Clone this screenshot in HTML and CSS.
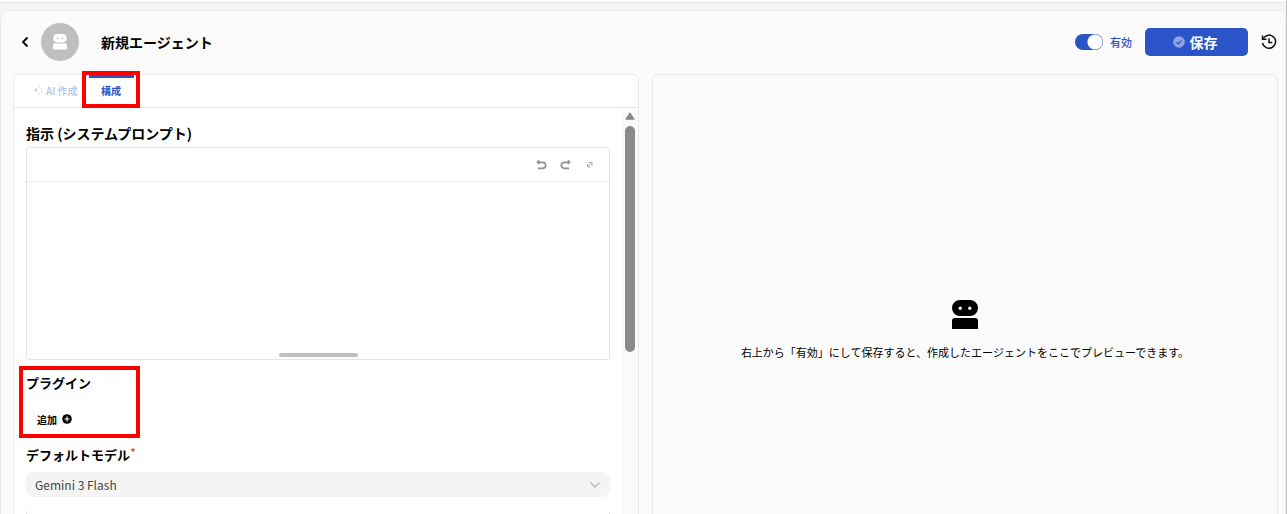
FILE: index.html
```html
<!DOCTYPE html>
<html lang="ja">
<head>
<meta charset="utf-8">
<title>新規エージェント</title>
<link rel="stylesheet" href="styles.css">
</head>
<body>
<svg class="defs" aria-hidden="true">
  <symbol id="robot" viewBox="0 0 26 30">
    <path fill="currentColor" fill-rule="evenodd" d="M8 0h10a8 8 0 0 1 0 16H8A8 8 0 0 1 8 0zM8.200 6.600a1.700 1.700 0 1 0 0 3.400a1.700 1.700 0 0 0 0-3.400zM17.800 6.600a1.700 1.700 0 1 0 0 3.400a1.700 1.700 0 0 0 0-3.400z"/>
    <path fill="currentColor" d="M3 18h20a3 3 0 0 1 3 3v8H0v-8a3 3 0 0 1 3-3z"/>
  </symbol>
</svg>
<div class="app">
  <header class="header">
    <button class="back" aria-label="戻る"><svg width="8" height="12" viewBox="0 0 8 12"><path d="M6.500 1.500L2 6l4.500 4.500" fill="none" stroke="#000" stroke-width="1.800"/></svg></button>
    <span class="avatar"><svg width="14" height="16"><use href="#robot"/></svg></span>
    <h1 class="title">新規エージェント</h1>
    <label class="enable"><input class="switch" type="checkbox" checked>有効</label>
    <button class="save"><svg width="12" height="12" viewBox="0 0 12 12"><circle cx="6" cy="6" r="5.800" fill="#8ea4e2"/><path d="M3.500 6.200l1.800 1.700 3.200-3.500" fill="none" stroke="#2b54c8" stroke-width="1.300"/></svg>保存</button>
    <button class="history" aria-label="履歴"><svg width="16" height="16" viewBox="0 0 16 16" fill="none" stroke="#111" stroke-width="1.500"><path d="M2.200 4.500A6.600 6.600 0 1 1 1.500 9"/><path d="M1.500 1.500v3.800h4"/><path d="M8 4.200v4.300h3.300"/></svg></button>
  </header>
  <main class="columns">
    <section class="panel editor">
      <nav class="tabs">
        <button class="tab" disabled><svg width="10" height="10" viewBox="0 0 10 10" fill="#c3cdef"><path d="M3 2.500l.8 1.700 1.700.8-1.700.8L3 7.500l-.8-1.700L.500 5l1.700-.8z"/><circle cx="6.500" cy="1.500" r=".8"/><circle cx="8.700" cy="4" r=".7"/><circle cx="8.500" cy="7" r=".7"/><circle cx="6" cy="8.700" r=".7"/></svg>AI 作成</button>
        <button class="tab active">構成<span class="mark mark-tab"></span></button>
      </nav>
      <div class="body">
        <form class="form">
          <label class="heading" for="prompt">指示 (システムプロンプト)</label>
          <div class="prompt">
            <div class="tools">
              <button type="button" aria-label="元に戻す"><svg width="11" height="11" viewBox="0 0 11 11" fill="none" stroke="#929292" stroke-width="1.700"><path d="M2 9.300h4.700a3 3 0 0 0 0-6H1.500"/><path d="M3 1.200L1.500 3.200l1.800 1.600"/></svg></button>
              <button type="button" aria-label="やり直す"><svg width="11" height="11" viewBox="0 0 11 11" fill="none" stroke="#929292" stroke-width="1.700"><path d="M9 9.300H4.300a3 3 0 0 1 0-6h5.200"/><path d="M8 1.200l1.500 2-1.800 1.600"/></svg></button>
              <button type="button" aria-label="拡大"><svg width="11" height="11" viewBox="0 0 11 11" fill="none" stroke="#aaa"><path d="M4.500 3.500H8V6.500M6.500 8H3.500V5M3.500 8L8 3.500"/></svg></button>
            </div>
            <textarea class="text" id="prompt"></textarea>
            <div class="grip"></div>
          </div>
          <section class="plugins">
            <h2 class="subheading">プラグイン</h2>
            <button type="button" class="add">追加<svg width="10" height="10" viewBox="0 0 10 10"><circle cx="5" cy="5" r="4.800"/><path d="M5 2.500v5M2.500 5h5" stroke="#fff" stroke-width="1.200"/></svg></button>
            <span class="mark mark-plugins"></span>
          </section>
          <label class="subheading" for="model">デフォルトモデル<span class="required">*</span></label>
          <div class="picker">
            <select class="model" id="model"><option>Gemini 3 Flash</option></select>
            <svg class="chevron" width="12" height="8" viewBox="0 0 12 8"><path d="M1.500 1.500L6 6l4.500-4.500" fill="none" stroke="#bbb" stroke-width="1.500"/></svg>
          </div>
          <div class="next"></div>
        </form>
        <div class="scroll">
          <svg width="10" height="8" viewBox="0 0 10 8"><path d="M5 .800L9.200 7.200H.800z" fill="#8a8a8a" stroke="#8a8a8a" stroke-linejoin="round"/></svg>
          <div class="thumb"></div>
        </div>
      </div>
    </section>
    <section class="panel preview">
      <svg width="26" height="30"><use href="#robot"/></svg>
      <p class="hint">右上から「有効」にして保存すると、作成したエージェントをここでプレビューできます。</p>
    </section>
  </main>
</div>
</body>
</html>
```
FILE: styles.css
```css
* { box-sizing: border-box; }
body {
  margin: 0;
  height: 100vh;
  overflow: hidden;
  padding-top: 8px;
  background: linear-gradient(#fff 2px, #e4e4e4 2px, #e4e4e4 3px, #f4f4f4 3px);
  border-right: 1px solid #c4c4c4;
  font-family: "Noto Sans CJK JP", "Noto Sans", sans-serif;
  color: #000;
}
button, textarea, select { font: inherit; color: inherit; }
button { display: flex; align-items: center; padding: 0; border: 0; background: none; }
svg { display: block; flex: none; }
.defs { position: absolute; width: 0; height: 0; }
.app {
  display: flex;
  flex-direction: column;
  height: calc(100vh + 64px);
  margin-top: 2px;
  padding: 0 7px 0 12px;
  background: #fbfbfb;
  border: 1px solid #ebebeb;
  border-radius: 8px;
}
.header { display: flex; align-items: center; height: 61px; flex: none; margin-bottom: 2px; padding-right: 1px; }
.back { width: 24px; padding-left: 8px; }
.avatar {
  display: grid;
  place-items: center;
  width: 38px;
  height: 38px;
  margin-left: 4px;
  border-radius: 50%;
  background: #bfbfbf;
  color: #fff;
}
.title { flex: 1; margin: 0 0 0 22px; font-size: 14px; line-height: 20px; font-weight: 700; }
.enable { display: flex; align-items: center; gap: 7px; font-size: 11px; font-weight: 500; color: #2b54c8; }
.switch {
  appearance: none;
  width: 28px;
  height: 16px;
  margin: 0;
  border-radius: 8px;
  background: radial-gradient(circle at 20px 8px, #fff 7px, #2b54c8 8px);
}
.save {
  justify-content: center;
  gap: 5px;
  width: 103px;
  height: 28px;
  margin-left: 13px;
  padding-right: 3px;
  border-radius: 5px;
  background: #2b54c8;
  color: #fff;
  font-size: 14px;
  font-weight: 700;
}
.history { margin-left: 13px; }
.columns { display: grid; grid-template-columns: 1fr 1fr; gap: 13px; flex: 1; min-height: 0; }
.panel { min-width: 0; border: 1px solid #e9e9e9; border-radius: 6px; }
.editor { display: flex; flex-direction: column; background: #fff; }
.tabs { display: flex; gap: 11px; height: 33px; flex: none; padding-left: 19px; border-bottom: 1px solid #e9e9e9; }
.tab { gap: 3px; padding-bottom: 2px; color: #b4c1eb; font-size: 10px; font-weight: 500; }
.tab.active {
  position: relative;
  justify-content: center;
  width: 45px;
  background: linear-gradient(#2b54c8 3px, transparent 3px);
  color: #2b54c8;
  font-weight: 700;
}
.mark { position: absolute; border: 4px solid #f00; pointer-events: none; }
.mark-tab { inset: -4px -6px -1px -7px; }
.mark-plugins { inset: 7px auto -6px -7px; width: 121px; }
.body { display: flex; flex: 1; min-height: 0; }
.form { flex: 1; min-width: 0; margin-top: 12px; padding: 0 12px; }
.heading { display: block; height: 27px; font-size: 14px; line-height: 27px; font-weight: 700; }
.prompt {
  display: flex;
  flex-direction: column;
  align-items: center;
  height: 213px;
  border: 1px solid #e4e4e4;
  border-radius: 3px;
}
.tools {
  display: flex;
  align-items: center;
  justify-content: flex-end;
  gap: 13px;
  width: 100%;
  height: 34px;
  padding-right: 14px;
  border-bottom: 1px solid #e9e9e9;
}
.text { flex: 1; width: 100%; padding: 8px; border: 0; outline: 0; resize: none; background: none; font-size: 12px; }
.grip { width: 79px; height: 4px; margin-bottom: 2px; border-radius: 2px; background: #bfbfbf; }
.plugins { position: relative; height: 71px; padding-top: 13px; }
.subheading { display: block; margin: 0; font-size: 13px; line-height: 20px; font-weight: 700; }
.add { gap: 5px; height: 20px; margin: 16px 0 0 11px; font-size: 10px; font-weight: 700; }
.mark-plugins { inset: 6px auto -7px -7px; }
.plugins + .subheading { margin-top: 14px; }
.required { color: #f33; font-size: 13px; font-weight: 400; vertical-align: 2px; line-height: 1; }
.picker { display: grid; align-items: center; margin-top: 7px; }
.model {
  grid-area: 1 / 1;
  appearance: none;
  width: 100%;
  height: 25px;
  padding: 0 9px;
  border: 0;
  border-radius: 8px;
  background: #f4f4f4;
  color: #444;
  font-size: 12px;
}
.chevron { grid-area: 1 / 1; justify-self: end; margin-right: 9px; pointer-events: none; }
.next { height: 40px; margin-top: 14px; border: solid #e4e4e4; border-width: 0 1px; }
.scroll { display: flex; flex-direction: column; align-items: center; gap: 6px; width: 16px; padding-top: 4px; background: #fbfbfb; }
.thumb { width: 10px; height: 226px; border-radius: 5px; background: #8a8a8a; }
.preview { display: flex; flex-direction: column; align-items: center; justify-content: center; gap: 13px; }
.hint { margin: 0; font-size: 11px; line-height: 18px; }
```
